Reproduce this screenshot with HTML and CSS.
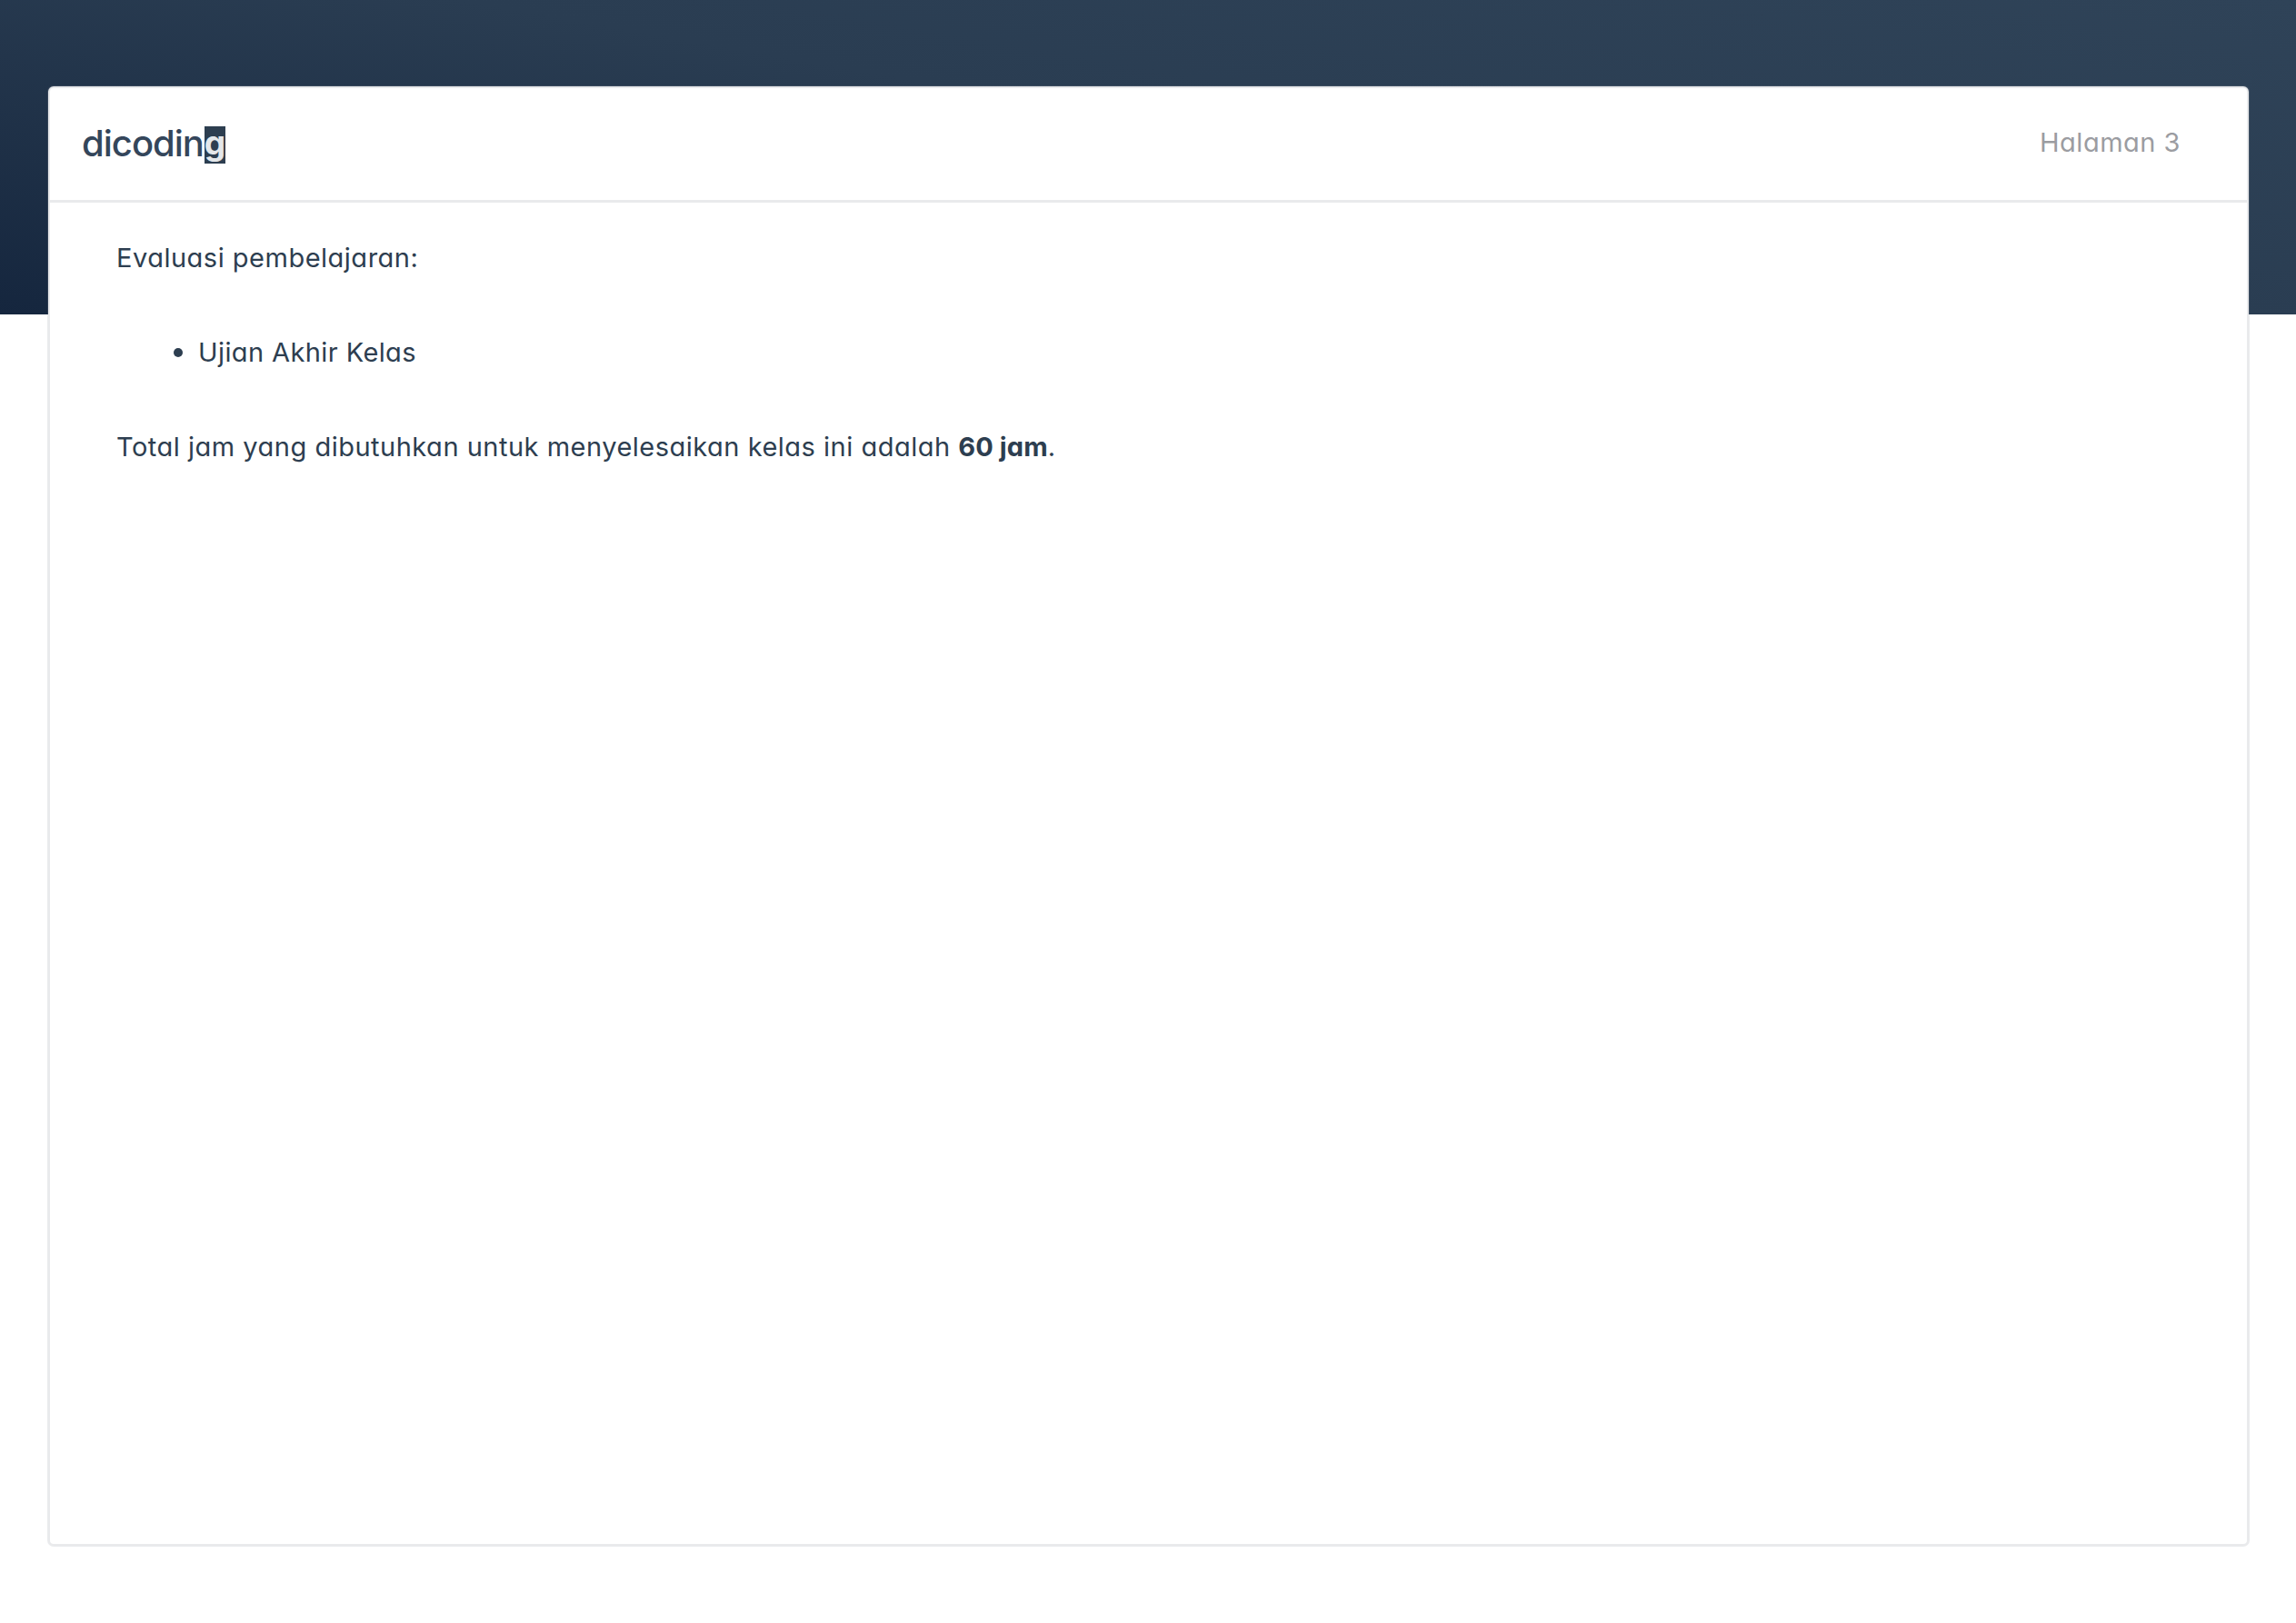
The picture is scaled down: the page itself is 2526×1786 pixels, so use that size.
FILE: index.html
```html
<!DOCTYPE html>
<html lang="id">
<head>
<meta charset="utf-8">
<title>Halaman 3</title>
<link rel="stylesheet" href="styles.css">
</head>
<body>
<main class="card">
  <header class="card-header">
    <div class="logo">dicodin<span class="logo-box">g</span></div>
    <div class="page-label">Halaman 3</div>
  </header>
  <section class="card-body">
    <p>Evaluasi pembelajaran:</p>
    <ul>
      <li>Ujian Akhir Kelas</li>
    </ul>
    <p>Total jam yang dibutuhkan untuk menyelesaikan kelas ini adalah <strong>60 jam</strong>.</p>
  </section>
</main>
</body>
</html>
```
FILE: styles.css
```css
* { box-sizing: border-box; }
html, body { margin: 0; height: 100%; }
body {
  padding: 95px 52px 85px 53px;
  background-color: #fff;
  background-image: linear-gradient(190deg, #2f4358 0%, #2a3d52 45%, #15263e 100%);
  background-size: 100% 346px;
  background-repeat: no-repeat;
  font-family: Inter, "Noto Sans", sans-serif;
  font-feature-settings: "cv11" 1;
  color: #2d3e50;
}
.card {
  height: 1606px;
  background: #fff;
  border: 2px solid #e9eaec;
  border-radius: 6px;
  box-shadow: 0 0 0 1px rgba(150, 155, 165, 0.2);
}
.card-header {
  height: 126px;
  display: flex;
  align-items: center;
  justify-content: space-between;
  padding: 2px 73px 0 35px;
  border-bottom: 3px solid #e9eaec;
}
.logo {
  display: flex;
  align-items: flex-start;
  height: 41px;
  font-size: 40px;
  line-height: 37px;
  font-weight: 500;
  letter-spacing: -1px;
  color: #34465b;
}
.logo-box {
  display: flex;
  justify-content: center;
  width: 23px;
  height: 41px;
  margin-left: 1px;
  background: #2d3e50;
  color: #e4e7ea;
  letter-spacing: 0;
  font-size: 37px;
  line-height: 36px;
  font-weight: 700;
}
.page-label {
  margin-bottom: 6px;
  font-size: 29px;
  line-height: 40px;
  letter-spacing: 0.5px;
  color: #9b9ca1;
}
.card-body {
  padding: 38px 73px;
  font-size: 29px;
  font-weight: 430;
  line-height: 46px;
  letter-spacing: 0.5px;
}
.card-body p { margin: 0; }
.card-body ul { margin: 57px 0 58px; padding: 0 0 0 90px; }
.card-body li { letter-spacing: 0.4px; }
.card-body li::marker { font-size: 32px; }
.card-body strong { font-weight: 700; letter-spacing: 0.1px; }
```
